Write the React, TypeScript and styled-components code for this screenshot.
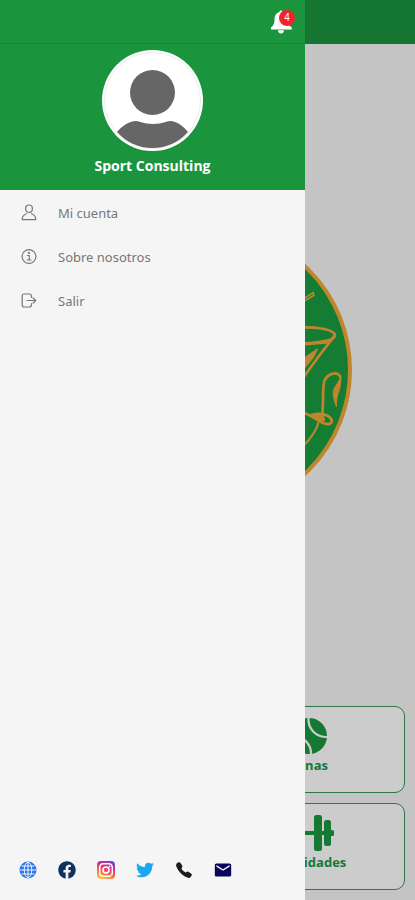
import React from "react";
import styled, { createGlobalStyle } from "styled-components";
import { FaFacebook, FaTwitter } from "react-icons/fa";
import { IoCall } from "react-icons/io5";
import { MdEmail } from "react-icons/md";

const green = "#1b943e";

const GlobalStyle = createGlobalStyle`
  *, *::before, *::after { box-sizing: border-box; }
  body {
    margin: 0;
    background: #f6f6f6;
    font-family: "Open Sans", "Noto Sans", sans-serif;
  }
  svg { display: block; flex: none; }
`;

const Screen = styled.div`
  min-height: 100vh;
  display: flex;
  flex-direction: column;
`;

const AppBar = styled.header`
  height: 44px;
  background: ${green};
`;

const Main = styled.main`
  flex: 1;
  display: flex;
  flex-direction: column;
`;

const LogoArea = styled.div`
  flex: 1;
  display: flex;
  justify-content: center;
  padding: 181px 0 20px;
`;

const Tiles = styled.nav`
  display: grid;
  grid-template-columns: 1fr 1fr;
  gap: 10px;
  padding: 10px;
`;

const Tile = styled.a`
  grid-column: 2;
  height: 87px;
  display: flex;
  flex-direction: column;
  align-items: center;
  padding-top: 9px;
  border: 1px solid #3f9359;
  border-radius: 10px;
  background: #ffffff;
  color: #1b9840;
  font-size: 13px;
  font-weight: 700;
  line-height: 18px;
  text-decoration: none;
`;

const Backdrop = styled.div`
  position: fixed;
  inset: 0;
  background: rgba(0, 0, 0, 0.2);
`;

const Drawer = styled.aside`
  position: fixed;
  top: 0;
  bottom: 0;
  left: 0;
  width: 305px;
  max-width: 100%;
  display: flex;
  flex-direction: column;
  background: #f5f5f5;
`;

const DrawerBar = styled.div`
  height: 44px;
  display: flex;
  align-items: center;
  justify-content: flex-end;
  padding-right: 10px;
  border-bottom: 1px solid #178437;
  background: ${green};
`;

const BellButton = styled.button`
  position: relative;
  padding: 0;
  border: 0;
  background: none;
  color: #ffffff;
`;

const Badge = styled.span`
  position: absolute;
  top: 0;
  right: 0;
  width: 16px;
  height: 16px;
  border-radius: 50%;
  background: #f5222d;
  font-size: 10px;
  line-height: 16px;
  text-align: center;
`;

const Profile = styled.section`
  display: flex;
  flex-direction: column;
  align-items: center;
  gap: 5px;
  padding: 6px 0 14px;
  background: ${green};
`;

const ProfileName = styled.h1`
  margin: 0;
  color: #ffffff;
  font-size: 14px;
  font-weight: 700;
  line-height: 20px;
`;

const Menu = styled.nav`
  flex: 1;
  display: flex;
  flex-direction: column;
  padding-top: 1px;
`;

const MenuLink = styled.a`
  height: 44px;
  display: flex;
  align-items: center;
  gap: 20px;
  padding: 0 20px;
  color: #777777;
  font-family: "Noto Sans", sans-serif;
  font-size: 13px;
  line-height: 20px;
  text-decoration: none;
`;

const Socials = styled.footer`
  display: flex;
  gap: 21px;
  padding: 0 19px 21px;
`;

const SocialLink = styled.a<{ $color: string }>`
  color: ${(p) => p.$color};
`;

const ClubLogo = () => (
  <svg width="290" height="290" viewBox="0 0 290 290" role="img" aria-label="Club">
    <circle cx="145" cy="145" r="142" fill="#1b9c42" stroke="#f0a836" strokeWidth="4" />
    <g transform="translate(232 25) scale(0.3333)" fill="none" stroke="#f0a836" strokeWidth="8" strokeLinecap="round" strokeLinejoin="round">
      <path d="M0 163 L54 128 L57 136 L12 162" strokeWidth="5" />
      <path d="M0 235 C50 228 108 236 119 252 C126 270 82 279 0 282" />
      <path d="M119 257 C88 298 58 333 18 394" />
      <path d="M102 278 L28 284" strokeWidth="5" />
      <path d="M24 326 L68 296 L56 322 L28 356 Z" fill="#f0a836" strokeWidth="3" />
      <path d="M82 490 C86 460 82 410 88 394 C98 366 133 364 136 382" />
      <path d="M137 380 C139 400 135 415 130 428 C125 442 124 455 124 470 C119 450 111 436 116 420 C120 406 131 399 137 380 Z" fill="#f0a836" strokeWidth="3" />
      <path d="M20 486 C43 493 70 512 85 519 C100 526 115 521 109 508 C98 490 67 488 48 496" />
      <path d="M72 512 C66 536 53 560 24 589" strokeWidth="6" />
      <path d="M46 496 L82 491 L90 511 L72 512 Z" fill="#f0a836" strokeWidth="3" />
    </g>
  </svg>
);

const Ball = () => (
  <svg width="40" height="40" viewBox="0 0 40 40" aria-hidden="true">
    <circle cx="20" cy="20" r="18" fill="currentColor" />
    <g fill="none" stroke="#ffffff" strokeWidth="2.2">
      <path d="M19.500 1C18.500 13 27 21.500 39 21" />
      <path d="M1 20C14 19.500 22.500 27 22 39" />
    </g>
  </svg>
);

const Barbell = () => (
  <svg width="50" height="40" viewBox="0 0 50 40" fill="currentColor" aria-hidden="true">
    <rect x="2" y="18" width="46" height="4" />
    <rect x="12" y="2" width="8" height="36" rx="2.500" />
    <rect x="30" y="2" width="8" height="36" rx="2.500" />
    <rect x="3" y="7" width="7" height="26" rx="2.500" />
    <rect x="40" y="7" width="7" height="26" rx="2.500" />
    <rect x="0" y="17" width="4" height="6" rx="1.500" />
    <rect x="46" y="17" width="4" height="6" rx="1.500" />
  </svg>
);

const Bell = () => (
  <svg width="24" height="24" viewBox="0 0 24 24" fill="currentColor" aria-hidden="true">
    <path d="M10 0.500c1 0 1.500.6 1.500 1.600 3.600.9 5.300 3.500 5.300 6.900 0 4.500 1 6.300 4 8.500v2H0v-2C2.700 15.300 3.500 13.500 3.500 9c0-3.400 1.700-6 5-6.900C8.500 1.100 9 .5 10 .5z" />
    <path d="M7 20.200h6c0 2-1.200 3.200-3 3.200S7 22.200 7 20.200z" />
  </svg>
);

const Avatar = () => (
  <svg width="101" height="101" viewBox="0 0 101 101" role="img" aria-label="Avatar">
    <circle cx="50.500" cy="50.500" r="50.500" fill="#ffffff" />
    <circle cx="50.500" cy="50.500" r="48" fill="none" stroke="#ececec" strokeWidth="1" />
    <circle cx="50.500" cy="42.500" r="22.500" fill="#666666" />
    <path d="M15 82C20 76 27 71 34 71c4 0 7 3 17 3s13-3 17-3c7 0 13 5 18 11C77 92 65 98 50.500 98S24 92 15 82z" fill="#666666" />
  </svg>
);

const lineIcon = {
  width: 18,
  height: 18,
  viewBox: "0 0 18 18",
  fill: "none",
  stroke: "currentColor",
  strokeWidth: 1.2,
  strokeLinecap: "round",
  strokeLinejoin: "round",
  "aria-hidden": true,
} as const;

const UserIcon = () => (
  <svg {...lineIcon}>
    <path d="M9 1c2.200 0 3.400 1.500 3.400 3.600S11 8.500 9 8.500 5.600 6.700 5.600 4.600 6.800 1 9 1z" />
    <path d="M6.500 9.700C4 10.500 2.200 11.800 2.200 15.700h13.600c0-3.900-1.800-5.200-4.300-6" />
  </svg>
);

const InfoIcon = () => (
  <svg {...lineIcon}>
    <circle cx="9" cy="8.500" r="6.900" />
    <path d="M7.500 7.500H9.300V12M7.300 12h3.800" />
    <circle cx="9" cy="4.900" r="0.500" fill="currentColor" />
  </svg>
);

const ExitIcon = () => (
  <svg {...lineIcon}>
    <path d="M11.500 5.500V4.200c0-1.400-.7-2.200-2.200-2.200H4C2.700 2 2.200 2.700 2.200 4v9c0 1.400.6 2 1.900 2h5.200c1.500 0 2.200-.7 2.200-2.200v-1.300" />
    <path d="M7 8.500h8.500M13 5.800l2.700 2.700L13 11.200" />
  </svg>
);

const GlobeIcon = () => (
  <svg width="18" height="18" viewBox="0 0 18 18" aria-hidden="true">
    <circle cx="9" cy="9" r="8.500" fill="currentColor" />
    <g fill="none" stroke="#f5f5f5" strokeWidth="1">
      <ellipse cx="9" cy="9" rx="3.800" ry="7.700" />
      <path d="M9 1v16M1 9h16M2.500 5h13M2.500 13h13" />
    </g>
  </svg>
);

const InstagramIcon = () => (
  <svg width="18" height="18" viewBox="0 0 18 18" aria-hidden="true">
    <defs>
      <linearGradient id="insta" x1="0.300" y1="1" x2="0.700" y2="0">
        <stop offset="0" stopColor="#ffc247" />
        <stop offset="0.350" stopColor="#fb6b48" />
        <stop offset="0.650" stopColor="#dc2c87" />
        <stop offset="1" stopColor="#7140d5" />
      </linearGradient>
    </defs>
    <rect width="18" height="18" rx="4" fill="url(#insta)" />
    <g fill="none" stroke="#ffffff" strokeWidth="1.500">
      <rect x="2.700" y="2.700" width="12.600" height="12.600" rx="3.500" />
      <circle cx="9" cy="9" r="3" />
    </g>
    <circle cx="12.600" cy="5.400" r="0.900" fill="#ffffff" />
  </svg>
);

const menu = [
  { label: "Mi cuenta", Icon: UserIcon },
  { label: "Sobre nosotros", Icon: InfoIcon },
  { label: "Salir", Icon: ExitIcon },
];

const socials = [
  { name: "Web", color: "#2575f0", icon: <GlobeIcon /> },
  { name: "Facebook", color: "#10305f", icon: <FaFacebook size={18} /> },
  { name: "Instagram", color: "#dc2c87", icon: <InstagramIcon /> },
  { name: "Twitter", color: "#18a8ed", icon: <FaTwitter size={18} /> },
  { name: "Teléfono", color: "#1c1c1c", icon: <IoCall size={18} /> },
  { name: "Correo", color: "#06065c", icon: <MdEmail size={18} viewBox="1 2 22 20" /> },
];

export default function App() {
  return (
    <>
      <GlobalStyle />
      <Screen>
        <AppBar />
        <Main>
          <LogoArea>
            <ClubLogo />
          </LogoArea>
          <Tiles>
            <Tile href="#zonas">
              <Ball />
              Zonas
            </Tile>
            <Tile href="#actividades">
              <Barbell />
              Actividades
            </Tile>
          </Tiles>
        </Main>
      </Screen>
      <Backdrop />
      <Drawer>
        <DrawerBar>
          <BellButton type="button" aria-label="Notificaciones">
            <Bell />
            <Badge>4</Badge>
          </BellButton>
        </DrawerBar>
        <Profile>
          <Avatar />
          <ProfileName>Sport Consulting</ProfileName>
        </Profile>
        <Menu>
          {menu.map(({ label, Icon }) => (
            <MenuLink key={label} href="#">
              <Icon />
              {label}
            </MenuLink>
          ))}
        </Menu>
        <Socials>
          {socials.map((s) => (
            <SocialLink key={s.name} href="#" aria-label={s.name} $color={s.color}>
              {s.icon}
            </SocialLink>
          ))}
        </Socials>
      </Drawer>
    </>
  );
}
